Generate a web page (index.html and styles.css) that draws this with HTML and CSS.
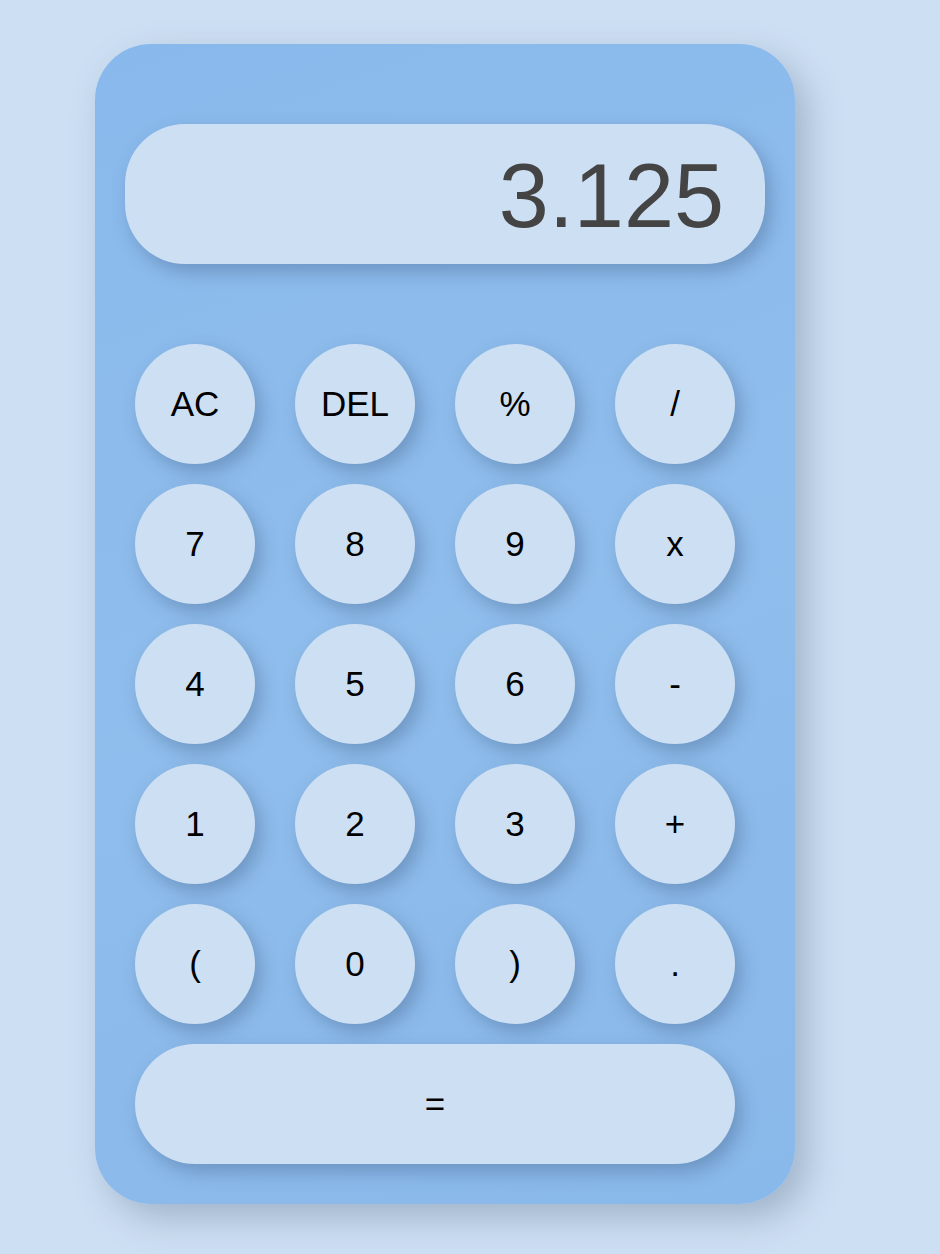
FILE: index.html
```html
<!DOCTYPE html>
<html>
<head>
<meta charset="utf-8">
<link rel="stylesheet" href="styles.css">
</head>
<body>
<div class="calculator">
  <div class="display">3.125</div>
  <div class="keys">
    <button class="key">AC</button>
    <button class="key">DEL</button>
    <button class="key">%</button>
    <button class="key">/</button>
    <button class="key">7</button>
    <button class="key">8</button>
    <button class="key">9</button>
    <button class="key">x</button>
    <button class="key">4</button>
    <button class="key">5</button>
    <button class="key">6</button>
    <button class="key">-</button>
    <button class="key">1</button>
    <button class="key">2</button>
    <button class="key">3</button>
    <button class="key">+</button>
    <button class="key">(</button>
    <button class="key">0</button>
    <button class="key">)</button>
    <button class="key">.</button>
    <button class="key equals">=</button>
  </div>
</div>
</body>
</html>
```
FILE: styles.css
```css
html, body {
  margin: 0;
  padding: 0;
  background: #cddff3;
  font-family: "Liberation Sans", Arial, sans-serif;
}
body {
  height: 1254px;
  padding-top: 44px;
  padding-left: 95px;
  box-sizing: border-box;
}
.calculator {
  width: 700px;
  height: 1160px;
  box-sizing: border-box;
  padding: 80px 30px 40px;
  border-radius: 56px;
  background: linear-gradient(160deg, #89b9ec 0%, #8fbdec 50%, #89b8ea 100%);
  box-shadow: 12px 14px 34px rgba(90, 110, 135, 0.38);
}
.display {
  height: 140px;
  border-radius: 60px;
  background: #cddff3;
  box-shadow: 6px 8px 18px rgba(60, 90, 130, 0.38);
  color: #444444;
  font-size: 90px;
  line-height: 144px;
  text-align: right;
  padding-right: 41px;
  box-sizing: border-box;
}
.keys {
  margin: 80px 10px 0;
  display: grid;
  grid-template-columns: repeat(4, 120px);
  grid-auto-rows: 120px;
  column-gap: 40px;
  row-gap: 20px;
}
.key {
  border: none;
  outline: none;
  border-radius: 50%;
  background: #cddff3;
  color: #000;
  font-family: "Liberation Sans", Arial, sans-serif;
  font-size: 35px;
  padding: 0;
  box-shadow: 6px 8px 18px rgba(60, 90, 130, 0.38);
}
.key.equals {
  grid-column: 1 / 5;
  border-radius: 60px;
}
```
